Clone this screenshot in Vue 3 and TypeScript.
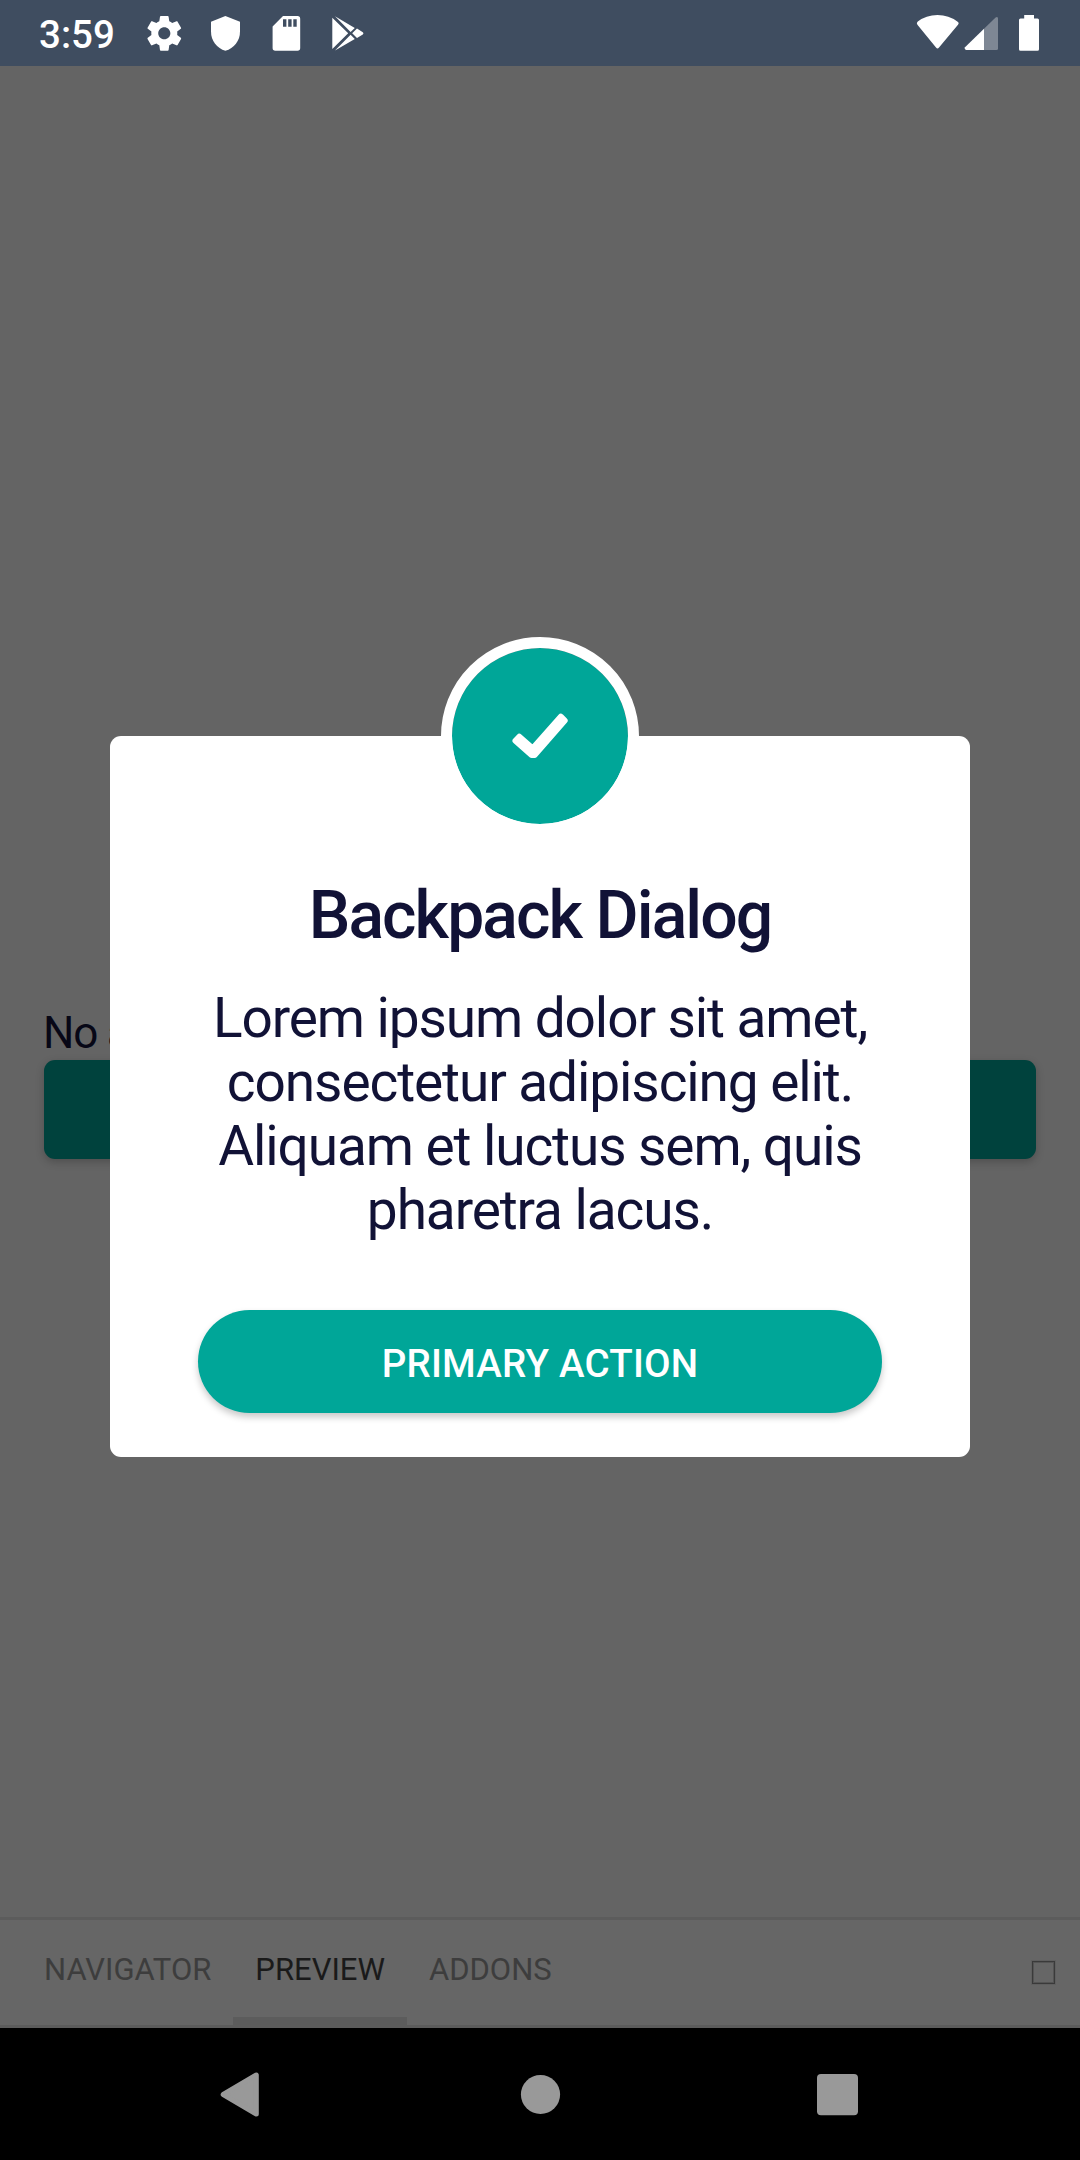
<script setup lang="ts">
import { ref } from 'vue'

const tabs: string[] = ['Navigator', 'Preview', 'Addons']
const activeTab = ref('Preview')
const lines: string[] = [
  'Lorem ipsum dolor sit amet,',
  'consectetur adipiscing elit.',
  'Aliquam et luctus sem, quis',
  'pharetra lacus.',
]
</script>

<template>
  <div class="screen">
    <header class="status">
      <span class="clock">3:59</span>
      <svg width="61" height="66" viewBox="0 0 61 66" fill="#fff">
        <path transform="translate(9.5 12.5) scale(1.733)" d="M19.43 12.98c.04-.32.07-.64.07-.98s-.03-.66-.07-.98l2.11-1.65c.19-.15.24-.42.12-.64l-2-3.46c-.12-.22-.39-.3-.61-.22l-2.49 1c-.52-.4-1.08-.73-1.69-.98l-.38-2.65C14.46 2.18 14.25 2 14 2h-4c-.25 0-.46.18-.49.42l-.38 2.65c-.61.25-1.17.59-1.69.98l-2.49-1c-.23-.09-.49 0-.61.22l-2 3.46c-.13.22-.07.49.12.64l2.11 1.65c-.04.32-.07.65-.07.98s.03.66.07.98l-2.11 1.65c-.19.15-.24.42-.12.64l2 3.46c.12.22.39.3.61.22l2.49-1c.52.4 1.08.73 1.69.98l.38 2.65c.03.24.24.42.49.42h4c.25 0 .46-.18.49-.42l.38-2.65c.61-.25 1.17-.59 1.69-.98l2.49 1c.23.09.49 0 .61-.22l2-3.46c.12-.22.07-.49-.12-.64l-2.11-1.65zM12 15.5c-1.93 0-3.5-1.57-3.5-3.5s1.57-3.5 3.5-3.5 3.5 1.57 3.5 3.5-1.57 3.5-3.5 3.5z" />
      </svg>
      <svg width="61" height="66" viewBox="0 0 61 66" fill="#fff">
        <path d="M30.4 16L45 21.8V31.5C45 41 39 48.3 30.4 50.8C22 48.3 16 41 16 31.5V21.8Z" />
      </svg>
      <svg width="61" height="66" viewBox="0 0 61 66" fill="#fff">
        <path fill-rule="evenodd" d="M27 16H41.5Q44.2 16 44.2 18.8V48Q44.2 50.7 41.5 50.7H19.3Q16.6 50.7 16.6 48V26.5ZM27 19.3V26.7H30.4V19.3ZM32.2 19.3V26.7H35.6V19.3ZM37.3 19.3V26.7H40.7V19.3Z" />
      </svg>
      <svg width="61" height="66" viewBox="0 0 61 66" fill="#fff">
        <path d="M15.3 17.8L31.2 33.3L15.3 49ZM18 16.2L37.8 28L33.6 32ZM18 50.5L37.8 39L33.6 34.8ZM40 28.6L45.8 32.2Q47.2 33.3 45.8 34.5L40 38L35.2 33.3Z" />
      </svg>
      <div class="status-right">
        <svg width="50" height="66" viewBox="0 0 50 66" fill="#fff">
          <path d="M5.4 24.8Q4 23 5.8 21.6Q14 15 25.5 15T45.3 21.6Q47.6 23 46 24.8L27 47.6Q25.5 49.4 24 47.6Z" />
        </svg>
        <svg width="40" height="66" viewBox="0 0 40 66" fill="#fff">
          <path fill-opacity=".33" d="M22 28.7L33.6 17.4Q36 16.2 36 18.5V48.5Q36 50 34.5 50H22Z" />
          <path d="M22 28.7V50H4.2Q2 49.5 3 47.3Z" />
        </svg>
        <svg class="battery" width="34" height="66" viewBox="0 0 34 66" fill="#fff">
          <path d="M12.2 15H22V18.4H25.5Q27 18.4 27 20V49.3Q27 50.8 25.5 50.8H8.5Q7 50.8 7 49.3V20Q7 18.4 8.5 18.4H12.2Z" />
        </svg>
      </div>
    </header>

    <main class="page">
      <div class="story">
        <p class="note">No action</p>
        <div class="open-button"></div>
      </div>
      <section class="dialog">
        <div class="badge">
          <svg width="176" height="176" viewBox="0 0 176 176">
            <path d="M63.5 92.7L67.3 88.7L80.7 100.4L108.8 68.7L112.7 72.6L82.6 106.9H79.6Z" fill="#fff" stroke="#fff" stroke-width="6" stroke-linejoin="round" />
          </svg>
        </div>
        <h1>Backpack Dialog</h1>
        <p class="copy"><span v-for="line in lines" :key="line">{{ line }}</span></p>
        <button type="button" class="primary">PRIMARY ACTION</button>
      </section>
    </main>

    <nav class="tabs">
      <div
        v-for="tab in tabs"
        :key="tab"
        class="tab"
        :class="{ active: tab === activeTab }"
        @click="activeTab = tab"
      >{{ tab.toUpperCase() }}</div>
      <i class="toggle"></i>
    </nav>

    <footer class="system">
      <svg width="100" height="132" viewBox="0 0 100 132">
        <path d="M33.2 66.5L66.3 47V86Z" fill="#999" stroke="#999" stroke-width="5" stroke-linejoin="round" />
      </svg>
      <svg width="100" height="132" viewBox="0 0 100 132"><circle cx="50.5" cy="66.5" r="19.6" fill="#999" /></svg>
      <svg width="100" height="132" viewBox="0 0 100 132"><rect x="27" y="46" width="41" height="41.3" rx="4" fill="#999" /></svg>
    </footer>
  </div>
</template>

<style>
body {
  margin: 0;
  background: #646464;
}
</style>

<style scoped>
.screen {
  width: 1080px;
  height: 2160px;
  display: flex;
  flex-direction: column;
  overflow: hidden;
  background: #646464;
  font-family: Roboto, sans-serif;
}
svg {
  display: block;
  flex: none;
}
.status {
  height: 66px;
  flex: none;
  display: flex;
  align-items: center;
  background: #3f4d60;
  color: #fff;
}
.clock {
  box-sizing: border-box;
  width: 134px;
  padding: 3px 0 0 39px;
  font-size: 38.5px;
  line-height: 46px;
  font-weight: 500;
}
.status-right {
  display: flex;
  margin-left: auto;
  padding-right: 34px;
}
.battery {
  margin-left: 10px;
}
.page {
  flex: 1;
  display: grid;
  grid-template-columns: 1080px;
  align-content: start;
}
.story {
  grid-area: 1 / 1;
  padding: 941px 44px 0;
}
.note {
  margin: 0 0 0 -1px;
  height: 53px;
  font-size: 44px;
  line-height: 52px;
  letter-spacing: -1.1px;
  color: #070716;
}
.open-button {
  height: 99px;
  border-radius: 11px;
  background: #00423d;
  box-shadow: 0 3px 8px rgba(0, 0, 0, 0.22);
}
.dialog {
  grid-area: 1 / 1;
  z-index: 1;
  box-sizing: border-box;
  width: 860px;
  height: 721px;
  margin: 670px 0 0 110px;
  padding: 0 88px;
  border-radius: 11px;
  background: #fff;
  color: #111236;
  display: flex;
  flex-direction: column;
  align-items: center;
}
.badge {
  flex: none;
  margin-top: -99px;
  border: 11px solid #fff;
  border-radius: 50%;
  background: #00a698;
  background-clip: padding-box;
}
h1 {
  margin: 41px 0 0;
  font-size: 66px;
  line-height: 79px;
  font-weight: 500;
  letter-spacing: -1.9px;
  white-space: nowrap;
}
.copy {
  margin: 31px 0 0;
  font-size: 55px;
  line-height: 64px;
  letter-spacing: -1.1px;
  text-align: center;
  white-space: nowrap;
}
.copy span {
  display: block;
}
.primary {
  width: 684px;
  height: 103px;
  margin: 68px 0 0;
  padding: 3px 0 0;
  flex: none;
  border: 0;
  border-radius: 52px;
  background: #00a698;
  box-shadow: 0 4px 7px rgba(0, 0, 0, 0.22);
  color: #fff;
  font-family: inherit;
  font-size: 38.5px;
  font-weight: 500;
  letter-spacing: 0.2px;
}
.tabs {
  box-sizing: border-box;
  flex: none;
  height: 111px;
  padding-left: 22px;
  display: flex;
  border-top: 3px solid #5c5c5c;
  border-bottom: 3px solid #5c5c5c;
  background: #666;
}
.tab {
  box-sizing: border-box;
  height: 105px;
  padding: 0 22px;
  border-bottom: 8px solid transparent;
  font-size: 31px;
  line-height: 99px;
  color: #3d3d3d;
}
.tab.active {
  border-bottom-color: #5c5c5c;
  color: #1a1a1a;
}
.toggle {
  box-sizing: border-box;
  width: 23px;
  height: 23px;
  margin: 41px 25px 0 auto;
  border: 1px solid #3a3a3a;
  box-shadow: 0 0 0 1px #5f5f5f, inset 0 0 0 1px #545454;
}
.system {
  flex: none;
  height: 132px;
  padding: 0 190px;
  display: flex;
  justify-content: space-between;
  background: #000;
}
</style>
